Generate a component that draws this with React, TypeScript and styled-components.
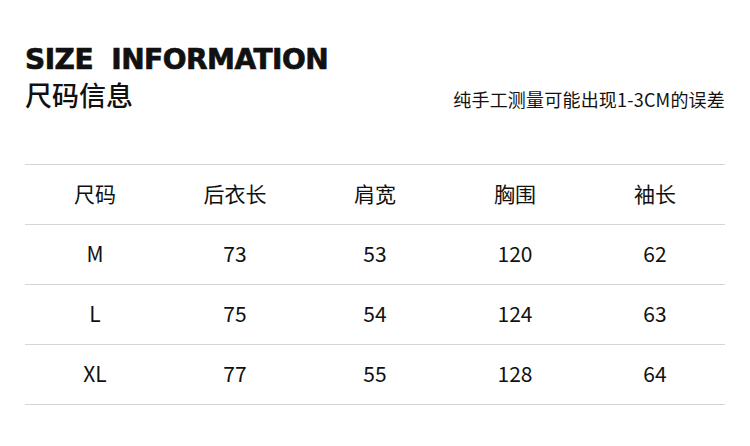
import React from 'react';
import styled, { createGlobalStyle } from 'styled-components';

const GlobalStyle = createGlobalStyle`
    html, body {
        margin: 0;
        padding: 0;
        background: #ffffff;
    }
    body {
        font-family: 'Noto Sans CJK SC', 'Noto Sans', sans-serif;
        color: #111111;
    }
`;

const Page = styled.div`
    width: 750px;
    height: 446px;
    padding: 43px 25px 0;
    box-sizing: border-box;
    background: #ffffff;
`;

const Header = styled.div`
    display: flex;
    justify-content: space-between;
    align-items: flex-end;
    height: 121px;
`;

const TitleBlock = styled.div`
    display: flex;
    flex-direction: column;
    align-self: flex-start;
`;

const Title = styled.h1`
    margin: 0;
    font-family: 'DejaVu Sans', sans-serif;
    font-weight: 700;
    font-size: 28px;
    line-height: 33px;
    letter-spacing: -0.5px;
    word-spacing: 9px;
    -webkit-text-stroke: 0.7px #111111;
    color: #111111;
`;

const Subtitle = styled.h2`
    margin: 0;
    font-family: 'Noto Sans CJK SC', sans-serif;
    font-weight: 500;
    font-size: 27px;
    line-height: 38px;
    color: #111111;
`;

const Note = styled.p`
    margin: 0 0 54px;
    font-family: 'Noto Sans CJK SC', sans-serif;
    font-weight: 400;
    font-size: 18px;
    line-height: 22px;
    letter-spacing: 0.2px;
    color: #111111;
`;

const Table = styled.div`
    border-top: 1px solid #d6d6d6;
`;

const Row = styled.div`
    display: grid;
    grid-template-columns: repeat(5, 1fr);
    height: 60px;
    padding-bottom: 4px;
    border-bottom: 1px solid #d6d6d6;
    box-sizing: border-box;
`;

const Cell = styled.div`
    display: flex;
    align-items: center;
    justify-content: center;
    font-family: 'Noto Sans CJK SC', sans-serif;
    font-size: 21px;
    font-weight: 400;
    color: #111111;
`;

const headers = ['尺码', '后衣长', '肩宽', '胸围', '袖长'];

const rows = [
    ['M', '73', '53', '120', '62'],
    ['L', '75', '54', '124', '63'],
    ['XL', '77', '55', '128', '64'],
];

export default function App() {
    return (
        <Page>
            <GlobalStyle />
            <Header>
                <TitleBlock>
                    <Title>SIZE INFORMATION</Title>
                    <Subtitle>尺码信息</Subtitle>
                </TitleBlock>
                <Note>纯手工测量可能出现1-3CM的误差</Note>
            </Header>
            <Table>
                <Row>
                    {headers.map((h) => (
                        <Cell key={h}>{h}</Cell>
                    ))}
                </Row>
                {rows.map((r) => (
                    <Row key={r[0]}>
                        {r.map((v, i) => (
                            <Cell key={i}>{v}</Cell>
                        ))}
                    </Row>
                ))}
            </Table>
        </Page>
    );
}
